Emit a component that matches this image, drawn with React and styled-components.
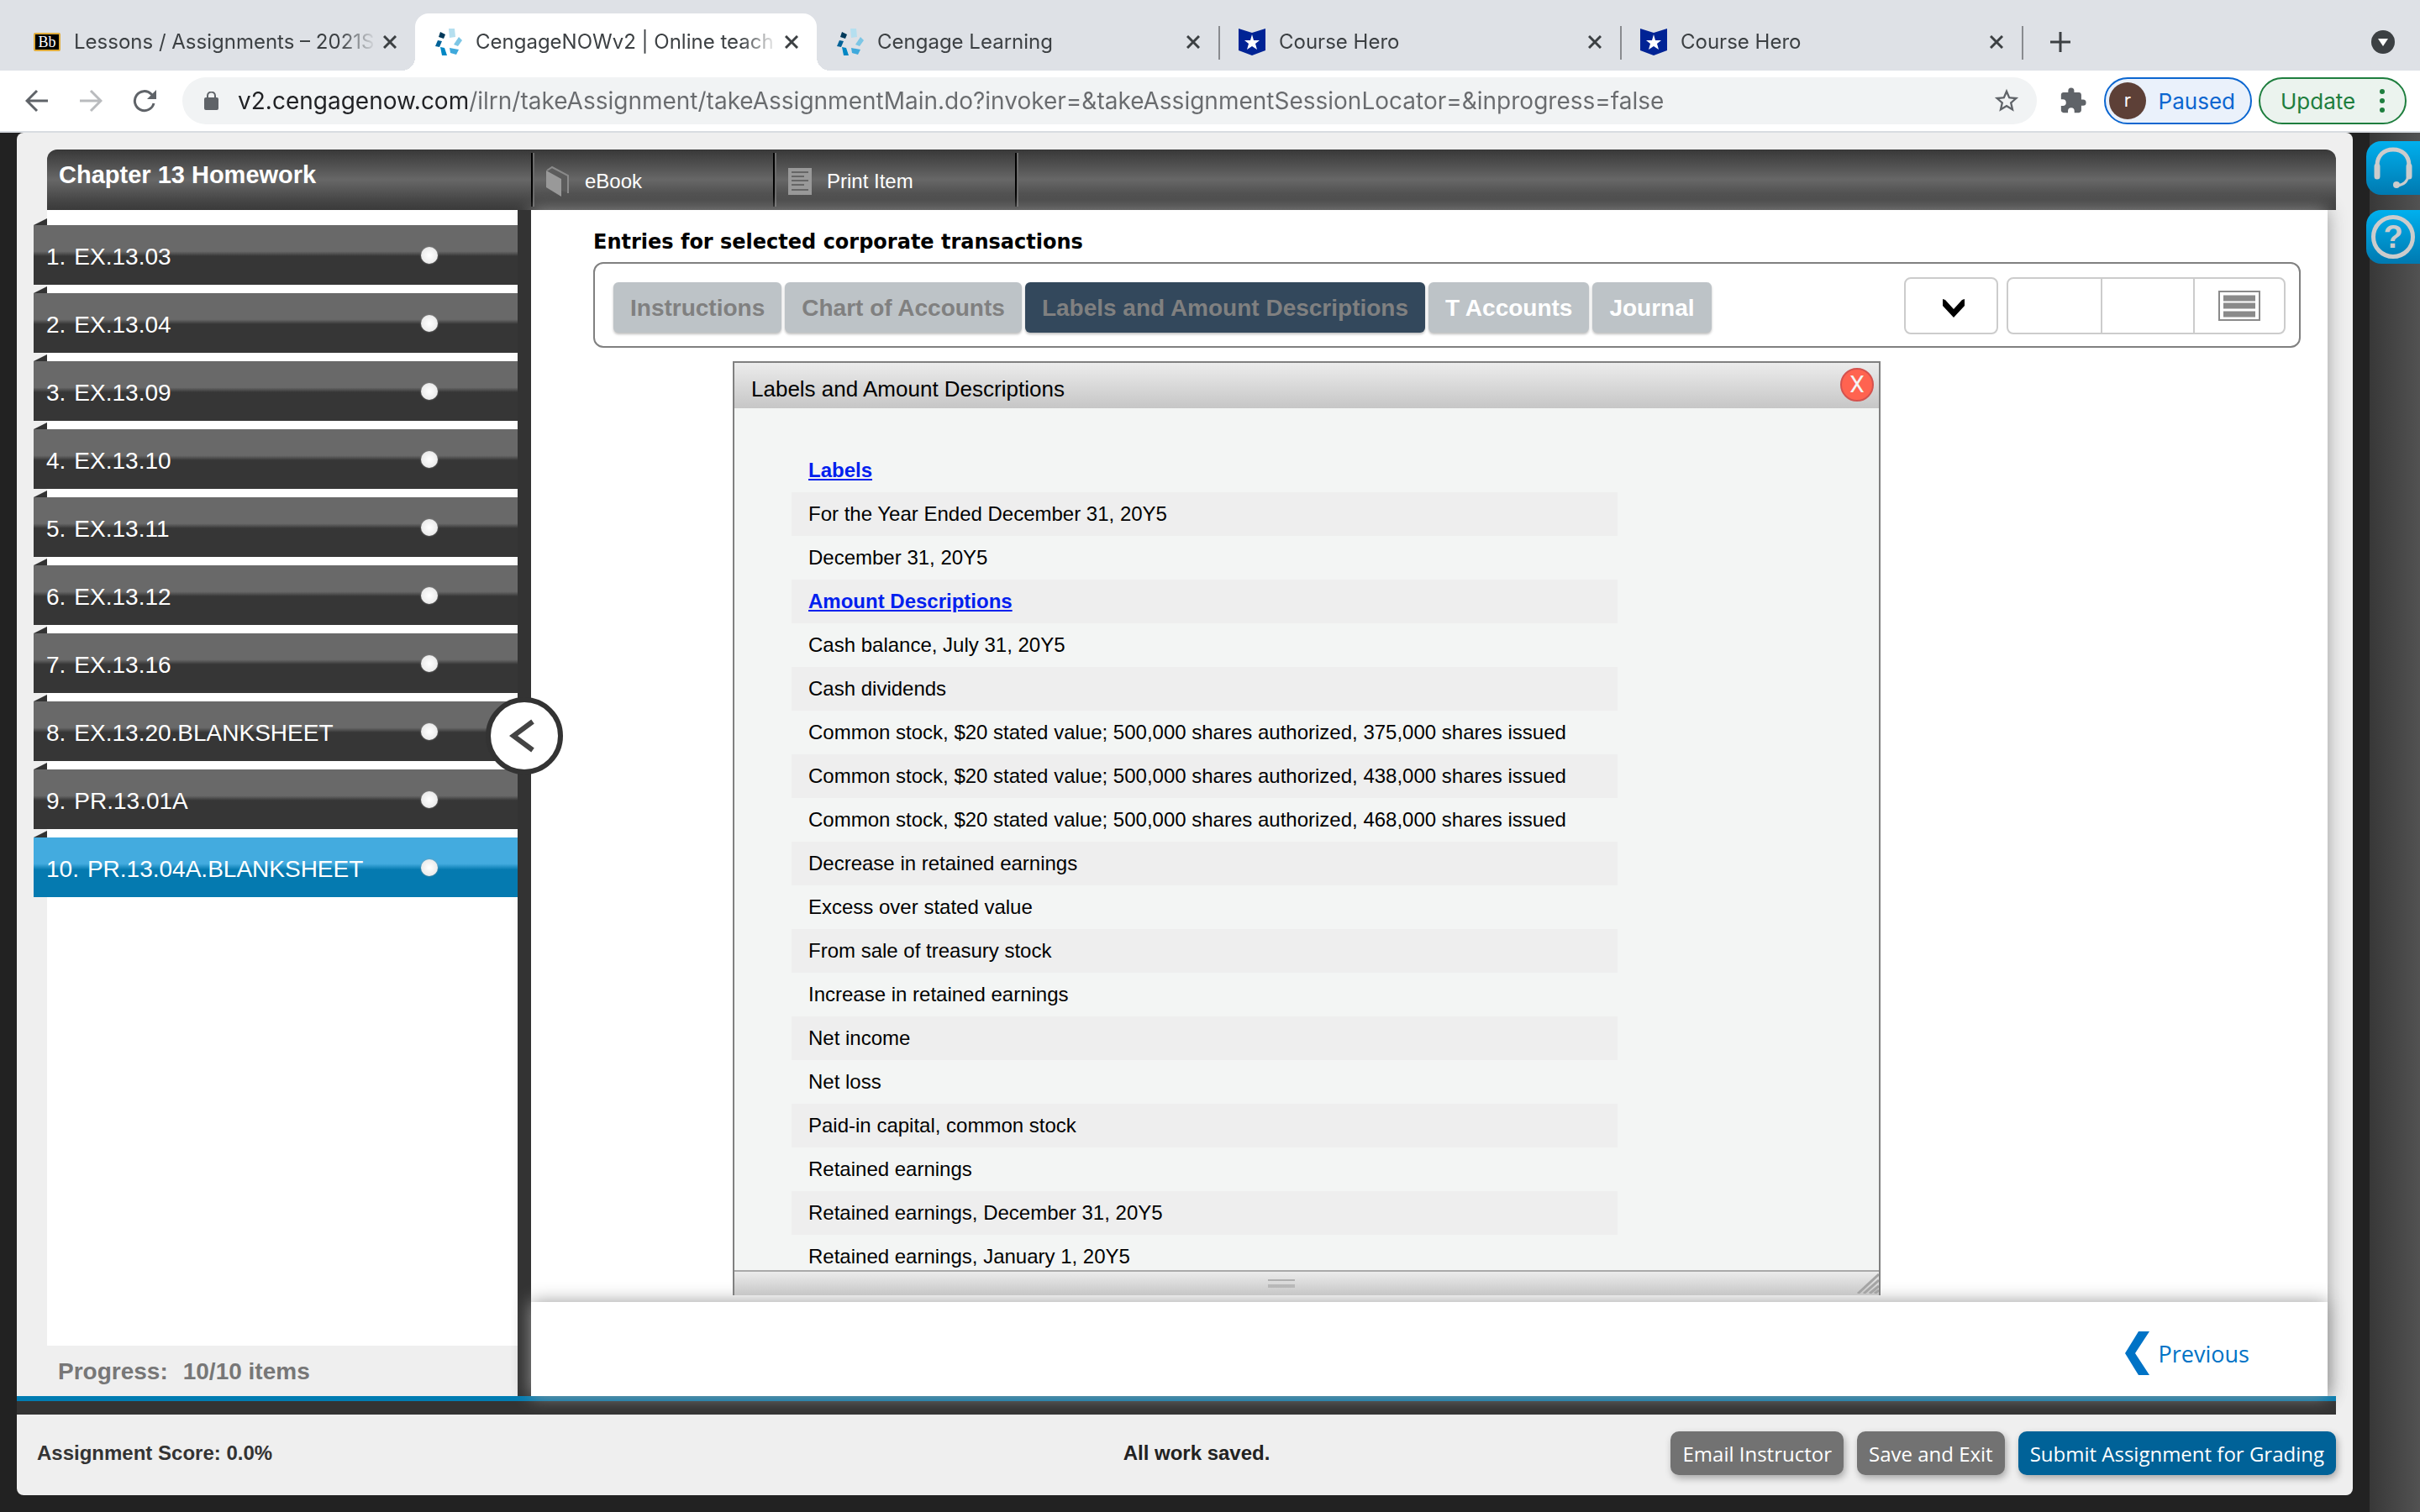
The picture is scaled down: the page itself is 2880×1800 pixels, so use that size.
import React from 'react';
import styled, { createGlobalStyle } from 'styled-components';

const GlobalStyle = createGlobalStyle`
    * {
        box-sizing: border-box;
    }

    body {
        margin: 0;
        background: #222222;
        font-family: "Liberation Sans", Arial, sans-serif;
    }

    button, input {
        margin: 0;
        padding: 0;
        border: 0;
        background: none;
        font: inherit;
        color: inherit;
    }

    button {
        cursor: pointer;
    }

    svg {
        display: block;
        flex: none;
    }
`;

const Page = styled.div`
    display: flex;
    flex-direction: column;
    height: 100vh;
`;

/* ---------- browser ---------- */

const TabStrip = styled.div`
    display: flex;
    flex: none;
    height: 84px;
    padding: 16px 30px 0 16px;
    background: #dee1e6;
    color: #3c4043;
    font-family: Inter, sans-serif;
    font-size: 24px;
`;

const BrowserTab = styled.div`
    position: relative;
    display: flex;
    align-items: center;
    width: 478px;
    height: 68px;
    padding: 0 20px 0 24px;
    border-radius: 16px 16px 0 0;
    background: ${props => (props.$active ? '#ffffff' : 'transparent')};

    &::before, &::after {
        content: "";
        display: ${props => (props.$active ? 'block' : 'none')};
        position: absolute;
        bottom: 0;
        width: 16px;
        height: 16px;
    }

    &::before {
        left: -16px;
        background: radial-gradient(circle at 0 0, transparent 16px, #ffffff 16px);
    }

    &::after {
        right: -16px;
        background: radial-gradient(circle at 100% 0, transparent 16px, #ffffff 16px);
    }
`;

const TabTitle = styled.button`
    flex: 1;
    min-width: 0;
    margin: 0 2px 0 16px;
    overflow: hidden;
    line-height: 32px;
    text-align: left;
    white-space: nowrap;
    mask-image: linear-gradient(90deg, #000 calc(100% - 48px), transparent calc(100% - 4px));
`;

const IconButton = styled.button`
    display: flex;
    align-items: center;
    justify-content: center;
    flex: none;
    width: ${props => props.$width || 20}px;
    height: 32px;
    color: ${props => props.$color || 'inherit'};
`;

const Divider = styled.div`
    width: 2px;
    height: 40px;
    margin: 15px -2px 0 0;
    background: #898b8f;
`;

const StripSpacer = styled.div`
    flex: 1;
`;

const StripAction = styled(IconButton)`
    width: 28px;
    height: 68px;
    margin-left: 32px;
`;

const Blackboard = styled.span`
    flex: none;
    width: 32px;
    height: 22px;
    border: 2px solid #e0ac3c;
    border-radius: 2px;
    background: #000;
    color: #fff;
    font: 18px/18px "Liberation Serif", serif;
    text-align: center;
`;

const Toolbar = styled.div`
    display: flex;
    align-items: center;
    flex: none;
    height: 74px;
    padding: 0 16px 0 28px;
    border-bottom: 2px solid #d8dce1;
    background: #ffffff;
    color: #5f6368;
    font-family: Inter, sans-serif;
    font-size: 26px;
`;

const NavButtons = styled.div`
    display: flex;
    gap: 32px;
    margin-right: 29px;
`;

const AddressBar = styled.div`
    display: flex;
    align-items: center;
    flex: 1;
    height: 56px;
    padding: 0 20px 0 26px;
    border-radius: 28px;
    background: #f1f3f4;
`;

const Address = styled.input`
    flex: 1;
    height: 40px;
    margin-left: 23px;
    outline: 0;
    background: linear-gradient(90deg, #202124 273px, #696b6e 273px);
    background-clip: text;
    color: transparent;
    font-size: 28px;
`;

const Extensions = styled(IconButton)`
    margin: 0 20px 0 26px;
    width: 34px;
`;

const Pill = styled.button`
    display: flex;
    align-items: center;
    justify-content: space-between;
    width: 176px;
    height: 56px;
    margin-right: 8px;
    padding: ${props => (props.$green ? '0 24px 0 24px' : '0 18px 0 4px')};
    border: 2px solid ${props => (props.$green ? '#1e7e3e' : '#0b66d0')};
    border-radius: 28px;
    background: ${props => (props.$green ? '#ebf3ee' : '#eaf1fb')};
    color: ${props => (props.$green ? '#1e7e3e' : '#0b66d0')};

    &:last-child {
        margin-right: 0;
    }
`;

const Avatar = styled.span`
    width: 44px;
    height: 44px;
    border-radius: 50%;
    background: #5d4037;
    color: #ffffff;
    font-size: 22px;
    line-height: 42px;
    text-align: center;
`;

/* ---------- application frame ---------- */

const Backdrop = styled.div`
    display: flex;
    flex: 1;
    min-height: 0;
    background: #222222;
`;

const Shell = styled.div`
    display: flex;
    flex-direction: column;
    flex: 1;
    min-width: 0;
    margin: 0 20px 20px;
    padding-top: 20px;
    border-radius: 8px;
    background: #efefef;
`;

const SideStrip = styled.aside`
    display: flex;
    flex-direction: column;
    gap: 18px;
    width: 60px;
    padding-top: 10px;
    background: linear-gradient(90deg, #383838, #525252);
`;

const HelpButton = styled.button`
    display: flex;
    align-items: center;
    justify-content: center;
    width: 64px;
    height: 64px;
    margin-left: -4px;
    border-radius: 18px 0 0 18px;
    background: linear-gradient(#00b0ee, #0079b0);
    color: #cccccc;
`;

const QuestionMark = styled.span`
    width: 52px;
    height: 52px;
    border: 5px solid #cccccc;
    border-radius: 50%;
    font-size: 38px;
    font-weight: bold;
    line-height: 42px;
`;

const TitleBar = styled.header`
    display: flex;
    align-items: center;
    flex: none;
    height: 72px;
    margin: 0 20px 0 36px;
    border-radius: 12px 12px 0 0;
    background: linear-gradient(#383838, #676767 50%, #464646 84%, #3a3a3a);
    color: #ffffff;
`;

const CourseTitle = styled.h1`
    width: 576px;
    margin: 0;
    padding: 0 0 12px 14px;
    font-size: 29px;
    line-height: 32px;
`;

const HeaderLink = styled.button`
    display: flex;
    align-items: center;
    gap: 18px;
    width: 288px;
    height: 64px;
    padding: 4px 0 0 16px;
    border-left: 2px solid #000000;
    box-shadow: inset 2px 0 #6b6b6b;
    font-size: 24px;
`;

const HeaderEnd = styled.div`
    width: 4px;
    height: 64px;
    border-left: 2px solid #000000;
    border-right: 2px solid #6b6b6b;
`;

const Workspace = styled.div`
    display: flex;
    flex: 1;
    min-height: 0;
    margin-right: 30px;
`;

/* ---------- sidebar ---------- */

const Sidebar = styled.nav`
    display: flex;
    flex-direction: column;
    width: 596px;
`;

const ItemList = styled.ol`
    display: flex;
    flex-direction: column;
    gap: 10px;
    flex: 1;
    margin: 0 0 0 36px;
    padding: 18px 0 0;
    background: #ffffff;
    list-style: none;
`;

const Item = styled.li`
    position: relative;
    height: 71px;
    margin-left: -16px;
    background: ${props => (props.$current
        ? 'linear-gradient(#43abdf 44%, #057ab0 54%)'
        : 'linear-gradient(#696969 44%, #363636 52%)')};

    &::before {
        content: "";
        position: absolute;
        top: -8px;
        left: 0;
        width: 16px;
        height: 8px;
        background: #333333;
        clip-path: polygon(0 100%, 100% 0, 100% 100%);
    }
`;

const ItemButton = styled.button`
    display: flex;
    align-items: center;
    gap: 10px;
    width: 100%;
    height: 100%;
    padding: 0 95px 0 15px;
    color: #ffffff;
    font-size: 28px;
    white-space: nowrap;

    span {
        padding-top: 5px;
    }

    &::after {
        content: "";
        width: 20px;
        height: 20px;
        margin-left: auto;
        border-radius: 50%;
        background: radial-gradient(circle, #ffffff, #e2e2e2);
        box-shadow: 0 0 2px #999999;
    }
`;

const Progress = styled.div`
    display: flex;
    gap: 18px;
    flex: none;
    height: 60px;
    padding: 0 0 0 49px;
    color: #777777;
    font-size: 28px;
    font-weight: bold;
    line-height: 62px;
`;

const Splitter = styled.div`
    position: relative;
    z-index: 1;
    width: 16px;
    background: #333333;
`;

const Collapse = styled.button`
    position: absolute;
    z-index: 4;
    top: 580px;
    left: -38px;
    display: flex;
    align-items: center;
    justify-content: center;
    width: 92px;
    height: 92px;
    padding-right: 6px;
    border: 6px solid #333333;
    border-radius: 50%;
    background: #ffffff;
`;

/* ---------- main panel ---------- */

const Main = styled.main`
    display: flex;
    flex-direction: column;
    flex: 1;
    min-width: 0;
    background: #ffffff;
    box-shadow: 0 0 20px #999999;
`;

const Content = styled.section`
    position: relative;
    z-index: 2;
    display: flex;
    flex-direction: column;
    flex: 1;
    min-height: 0;
    margin-bottom: 8px;
    padding: 24px 32px 0 74px;
`;

const Heading = styled.h2`
    margin: 0 0 10px;
    font-family: "DejaVu Sans", Verdana, sans-serif;
    font-size: 24px;
    line-height: 28px;
`;

const TabBar = styled.div`
    display: flex;
    align-items: center;
    gap: 4px;
    flex: none;
    height: 102px;
    padding: 0 16px 0 22px;
    border: 2px solid #808080;
    border-radius: 12px;
`;

const SheetTab = styled.button`
    height: 60px;
    margin-top: 6px;
    padding: 2px 20px 0;
    border-radius: 6px;
    background: ${props => (props.$active ? '#33485c' : '#bdc3c7')};
    box-shadow: 0 2px 3px rgba(0, 0, 0, 0.25);
    color: ${props => (props.$open ? '#ffffff' : '#808080')};
    font-size: 28px;
    font-weight: bold;
    white-space: nowrap;
`;

const ToolGroup = styled.div`
    display: flex;
    height: 68px;
    margin-top: 2px;
    margin-left: ${props => (props.$first ? 'auto' : '6px')};
    border: 2px solid #cccccc;
    border-radius: 8px;
`;

const Tool = styled.button`
    display: flex;
    align-items: center;
    justify-content: center;
    width: ${props => props.$width || 110}px;
    padding: ${props => (props.$dropdown ? '6px 0 0 6px' : '0')};

    & + & {
        border-left: 2px solid #cccccc;
    }
`;

const Dialog = styled.section`
    display: flex;
    flex-direction: column;
    flex: 1;
    min-height: 0;
    margin: 16px 500px 0 166px;
    border: 2px solid #808080;
    border-bottom: 0;
    background: #f3f5f4;
`;

const DialogHeader = styled.header`
    display: flex;
    align-items: center;
    justify-content: space-between;
    flex: none;
    height: 54px;
    padding: 0 6px 2px 20px;
    background: linear-gradient(#ececec, #c6c6c6);
`;

const DialogTitle = styled.h3`
    margin: 0;
    padding-top: 10px;
    font-size: 26px;
    font-weight: normal;
`;

const CloseButton = styled.button`
    width: 40px;
    height: 40px;
    border: 2px solid #d4524e;
    border-radius: 50%;
    background: #ff6350;
    color: #f4f4f4;
    font-family: Roboto, sans-serif;
    font-size: 28px;
    line-height: 36px;
`;

const Rows = styled.ul`
    flex: 1;
    min-height: 0;
    margin: 0;
    padding: 48px 0 0 68px;
    overflow: hidden;
    list-style: none;
`;

const Row = styled.li`
    width: 76%;
    height: 52px;
    padding-left: 20px;
    font-size: 24px;
    line-height: 52px;

    &:nth-child(even) {
        background: #eeeeee;
    }

    a {
        color: #0020ee;
        font-weight: bold;
    }
`;

const DialogFooter = styled.footer`
    display: flex;
    align-items: center;
    flex: none;
    height: 30px;
    border-top: 2px solid #a9a9a9;
    background: linear-gradient(#ececec, #c6c6c6);
`;

const Grip = styled.span`
    width: 32px;
    height: 10px;
    margin: 0 auto 0 calc(50% - 46px);
    border-top: 2px solid #b0b0b0;
    border-bottom: 4px solid #b8b8b8;
`;

const Pager = styled.footer`
    position: relative;
    z-index: 1;
    display: flex;
    align-items: center;
    justify-content: flex-end;
    flex: none;
    height: 112px;
    padding: 10px 93px 0;
    background: #ffffff;
    box-shadow: 0 0 20px #999999;
`;

const Previous = styled.button`
    display: flex;
    align-items: center;
    gap: 10px;
    color: #0073c6;
    font-family: "Open Sans", sans-serif;
    font-size: 27px;
`;

/* ---------- status bar ---------- */

const Rail = styled.div`
    flex: none;
    height: 22px;
    margin-right: 20px;
    border-top: 6px solid #007cb2;
    background: #333333;
`;

const StatusBar = styled.footer`
    display: grid;
    grid-template-columns: 1fr auto 1fr;
    align-items: center;
    flex: none;
    height: 96px;
    padding: 0 20px 4px 24px;
    color: #333333;
    font-size: 24px;
    font-weight: bold;
`;

const Saved = styled.output`
    padding-left: 24px;
    color: #222222;
`;

const Actions = styled.div`
    display: flex;
    justify-content: flex-end;
    gap: 16px;
`;

const ActionButton = styled.button`
    height: 52px;
    padding: 0 14px;
    border-radius: 10px;
    background: ${props => (props.$primary ? '#006298' : '#727272')};
    box-shadow: 2px 4px 8px rgba(0, 0, 0, 0.3);
    color: #ffffff;
    font-family: "Open Sans", sans-serif;
    font-size: 24px;
    font-weight: 400;
    white-space: nowrap;
`;

/* ---------- icons ---------- */

const CrossIcon = () => (
    <svg width="16" height="16" viewBox="0 0 16 16" stroke="#3c4043" strokeWidth="3">
        <path d="M1 1l14 14M15 1L1 15" />
    </svg>
);

const CengageIcon = () => (
    <svg width="32" height="32" viewBox="0 0 32 32">
        <path d="M16 0h7l1 10-7 1z" fill="#b5dfef" />
        <path d="M6 4l6 3-2 5-6-2z" fill="#00395a" />
        <path d="M3 14l5 1-3 7-5-1z" fill="#006298" />
        <path d="M6 22l5 1 3 9H8z" fill="#0087c4" />
        <path d="M17 23l11 2-3 6-7-2z" fill="#3fa9dc" />
        <path d="M28 10l4 4-5 7-5-2z" fill="#7cc6e5" />
    </svg>
);

const CourseHeroIcon = () => (
    <svg width="32" height="32" viewBox="0 0 32 32">
        <path d="M0 0l16 5L32 0v26l-16 6-16-6z" fill="#002395" />
        <path d="M16 7l2 7h7l-5 4 2 7-6-4-6 4 2-7-5-4h7z" fill="#fff" />
    </svg>
);

const PlusIcon = () => (
    <svg width="24" height="24" viewBox="0 0 24 24" stroke="#3c4043" strokeWidth="3">
        <path d="M12 0v24M0 12h24" />
    </svg>
);

const TabSearchIcon = () => (
    <svg width="28" height="28" viewBox="0 0 28 28">
        <circle cx="14" cy="14" r="14" fill="#3c4043" />
        <path d="M8 10h12l-6 9z" fill="#fff" />
    </svg>
);

const BackIcon = ({ flip }) => (
    <svg width="28" height="28" viewBox="0 0 28 28" fill="none" stroke="currentColor" strokeWidth="3">
        <path d={flip ? 'M1 14h24M14 2l12 12-12 12' : 'M27 14H3M14 2L2 14l12 12'} />
    </svg>
);

const ReloadIcon = () => (
    <svg width="28" height="28" viewBox="0 0 28 28" fill="none" stroke="currentColor" strokeWidth="3">
        <path d="M25 17a11.500 11.500 0 1 1-3-11l4 4" />
        <path d="M28 1v11H17z" fill="currentColor" stroke="none" />
    </svg>
);

const LockIcon = () => (
    <svg width="17" height="22" viewBox="0 0 17 22">
        <path d="M4 9V5a4.500 4.500 0 0 1 9 0v4" fill="none" stroke="#5f6368" strokeWidth="2" />
        <rect y="7" width="17" height="15" rx="2" fill="#5f6368" />
    </svg>
);

const StarIcon = () => (
    <svg width="34" height="34" viewBox="0 0 24 24" fill="currentColor">
        <path d="M22 9.240l-7.190-.62L12 2 9.190 8.630 2 9.240l5.460 4.730L5.820 21 12 17.270 18.180 21l-1.630-7.030L22 9.240zM12 15.400l-3.760 2.270 1-4.280-3.320-2.880 4.380-.38L12 6.100l1.710 4.040 4.380.38-3.320 2.880 1 4.280L12 15.400z" />
    </svg>
);

const PuzzleIcon = () => (
    <svg width="34" height="34" viewBox="0 0 24 24" fill="currentColor">
        <path d="M20.500 11H19V7c0-1.100-.9-2-2-2h-4V3.500a2.500 2.500 0 0 0-5 0V5H4c-1.100 0-2 .9-2 2v3.800h1.500a2.700 2.700 0 0 1 0 5.400H2V20c0 1.100.9 2 2 2h3.800v-1.500a2.700 2.700 0 0 1 5.400 0V22H17c1.100 0 2-.9 2-2v-4h1.500a2.500 2.500 0 0 0 0-5z" />
    </svg>
);

const DotsIcon = () => (
    <svg width="6" height="28" viewBox="0 0 6 28" fill="currentColor">
        <circle cx="3" cy="3" r="3" />
        <circle cx="3" cy="14" r="3" />
        <circle cx="3" cy="25" r="3" />
    </svg>
);

const BookIcon = () => (
    <svg width="28" height="38" viewBox="0 0 28 38">
        <path d="M1 5l6-4 18 10v21l-7-2z" fill="#5c5c5c" />
        <path d="M0 6l18 10v21L0 26z" fill="#999" />
        <path d="M1 6l6-4 19 10v21" fill="none" stroke="#8a8a8a" strokeWidth="2" />
    </svg>
);

const PageIcon = () => (
    <svg width="28" height="32" viewBox="0 0 28 32">
        <path d="M0 0h28v32H0z" fill="#999" />
        <path d="M4 5h20M4 10h15M4 15h20M4 20h15M4 26h20" stroke="#666" strokeWidth="2" />
    </svg>
);

const HeadsetIcon = () => (
    <svg width="48" height="50" viewBox="0 0 48 50" fill="none" stroke="#ccc">
        <path d="M5 28v-6C5 10 13 3 24 3s19 7 19 19v6" strokeWidth="5" />
        <path d="M5 23v12M43 23v12" strokeWidth="7" strokeLinecap="round" />
        <path d="M42 34c-1 7-5 11-13 12" strokeWidth="3" />
        <circle cx="28" cy="45" r="4" fill="#ccc" stroke="none" />
    </svg>
);

const ChevronLeftIcon = () => (
    <svg width="30" height="40" viewBox="0 0 30 40" fill="none" stroke="#444" strokeWidth="6">
        <path d="M28 3L5 20l23 17" />
    </svg>
);

const ChevronDownIcon = () => (
    <svg width="26" height="22" viewBox="0 0 26 22">
        <path d="M0 0l3 1 10 11L23 1l3-1v8L13 22 0 8z" />
    </svg>
);

const ListIcon = () => (
    <svg width="50" height="36" viewBox="0 0 50 36">
        <rect x="1" y="1" width="48" height="34" fill="none" stroke="#8a8a8a" strokeWidth="2" />
        <path d="M6 9h38M6 18h38M6 28h38" stroke="#8a8a8a" strokeWidth="7" />
    </svg>
);

const ResizeIcon = () => (
    <svg width="26" height="24" viewBox="0 0 26 24" stroke="#a4a4a4" strokeWidth="3">
        <path d="M1 24L26 1M8 24L26 8M15 24l11-9M21 24l5-4" />
    </svg>
);

const PreviousIcon = () => (
    <svg width="30" height="52" viewBox="0 0 30 52" fill="currentColor">
        <path d="M16 0h13L12 26l17 26H16L0 26z" />
    </svg>
);

/* ---------- data ---------- */

const browserTabs = [
    { title: 'Lessons / Assignments – 2021S', icon: <Blackboard>Bb</Blackboard> },
    { title: 'CengageNOWv2 | Online teach', icon: <CengageIcon />, active: true },
    { title: 'Cengage Learning', icon: <CengageIcon />, divider: true },
    { title: 'Course Hero', icon: <CourseHeroIcon />, divider: true },
    { title: 'Course Hero', icon: <CourseHeroIcon />, divider: true },
];

const assignments = [
    'EX.13.03',
    'EX.13.04',
    'EX.13.09',
    'EX.13.10',
    'EX.13.11',
    'EX.13.12',
    'EX.13.16',
    'EX.13.20.BLANKSHEET',
    'PR.13.01A',
    'PR.13.04A.BLANKSHEET',
];

const sheets = [
    { name: 'Instructions' },
    { name: 'Chart of Accounts' },
    { name: 'Labels and Amount Descriptions', active: true },
    { name: 'T Accounts', open: true },
    { name: 'Journal', open: true },
];

const rows = [
    { text: 'Labels', heading: true },
    { text: 'For the Year Ended December 31, 20Y5' },
    { text: 'December 31, 20Y5' },
    { text: 'Amount Descriptions', heading: true },
    { text: 'Cash balance, July 31, 20Y5' },
    { text: 'Cash dividends' },
    { text: 'Common stock, $20 stated value; 500,000 shares authorized, 375,000 shares issued' },
    { text: 'Common stock, $20 stated value; 500,000 shares authorized, 438,000 shares issued' },
    { text: 'Common stock, $20 stated value; 500,000 shares authorized, 468,000 shares issued' },
    { text: 'Decrease in retained earnings' },
    { text: 'Excess over stated value' },
    { text: 'From sale of treasury stock' },
    { text: 'Increase in retained earnings' },
    { text: 'Net income' },
    { text: 'Net loss' },
    { text: 'Paid-in capital, common stock' },
    { text: 'Retained earnings' },
    { text: 'Retained earnings, December 31, 20Y5' },
    { text: 'Retained earnings, January 1, 20Y5' },
];

const url = 'v2.cengagenow.com/ilrn/takeAssignment/takeAssignmentMain.do?invoker=&takeAssignmentSessionLocator=&inprogress=false';

/* ---------- sections ---------- */

const Browser = () => (
    <>
        <TabStrip>
            {browserTabs.map((tab, i) => (
                <React.Fragment key={i}>
                    <BrowserTab $active={tab.active}>
                        {tab.icon}
                        <TabTitle>{tab.title}</TabTitle>
                        <IconButton aria-label="Close tab"><CrossIcon /></IconButton>
                    </BrowserTab>
                    {tab.divider && <Divider />}
                </React.Fragment>
            ))}
            <StripAction aria-label="New tab"><PlusIcon /></StripAction>
            <StripSpacer />
            <StripAction aria-label="Search tabs"><TabSearchIcon /></StripAction>
        </TabStrip>
        <Toolbar>
            <NavButtons>
                <IconButton $width={32} aria-label="Back"><BackIcon /></IconButton>
                <IconButton $width={32} $color="#b9bbbe" aria-label="Forward"><BackIcon flip /></IconButton>
                <IconButton $width={32} aria-label="Reload"><ReloadIcon /></IconButton>
            </NavButtons>
            <AddressBar>
                <LockIcon />
                <Address aria-label="Address" defaultValue={url} />
                <IconButton $width={32} aria-label="Bookmark"><StarIcon /></IconButton>
            </AddressBar>
            <Extensions aria-label="Extensions"><PuzzleIcon /></Extensions>
            <Pill><Avatar>r</Avatar>Paused</Pill>
            <Pill $green>Update<DotsIcon /></Pill>
        </Toolbar>
    </>
);

const AssignmentNav = () => (
    <Sidebar>
        <ItemList>
            {assignments.map((name, i) => (
                <Item key={name} $current={i === assignments.length - 1}>
                    <ItemButton><span>{i + 1}.</span><span>{name}</span></ItemButton>
                </Item>
            ))}
        </ItemList>
        <Progress><span>Progress:</span><span>10/10 items</span></Progress>
    </Sidebar>
);

const LabelsDialog = () => (
    <Dialog>
        <DialogHeader>
            <DialogTitle>Labels and Amount Descriptions</DialogTitle>
            <CloseButton aria-label="Close">X</CloseButton>
        </DialogHeader>
        <Rows>
            {rows.map(row => (
                <Row key={row.text}>
                    {row.heading ? <a href="#labels">{row.text}</a> : row.text}
                </Row>
            ))}
        </Rows>
        <DialogFooter>
            <Grip />
            <ResizeIcon />
        </DialogFooter>
    </Dialog>
);

const App = () => {
    return (
        <Page>
            <GlobalStyle />
            <Browser />
            <Backdrop>
                <Shell>
                    <TitleBar>
                        <CourseTitle>Chapter 13 Homework</CourseTitle>
                        <HeaderLink><BookIcon />eBook</HeaderLink>
                        <HeaderLink><PageIcon />Print Item</HeaderLink>
                        <HeaderEnd />
                    </TitleBar>
                    <Workspace>
                        <AssignmentNav />
                        <Splitter>
                            <Collapse aria-label="Collapse sidebar"><ChevronLeftIcon /></Collapse>
                        </Splitter>
                        <Main>
                            <Content>
                                <Heading>Entries for selected corporate transactions</Heading>
                                <TabBar>
                                    {sheets.map(sheet => (
                                        <SheetTab key={sheet.name} $active={sheet.active} $open={sheet.open}>
                                            {sheet.name}
                                        </SheetTab>
                                    ))}
                                    <ToolGroup $first>
                                        <Tool $width={108} $dropdown aria-label="Expand"><ChevronDownIcon /></Tool>
                                    </ToolGroup>
                                    <ToolGroup>
                                        <Tool aria-label="Undo" />
                                        <Tool aria-label="Redo" />
                                        <Tool $width={108} aria-label="List view"><ListIcon /></Tool>
                                    </ToolGroup>
                                </TabBar>
                                <LabelsDialog />
                            </Content>
                            <Pager>
                                <Previous><PreviousIcon />Previous</Previous>
                            </Pager>
                        </Main>
                    </Workspace>
                    <Rail />
                    <StatusBar>
                        <div>Assignment Score: 0.0%</div>
                        <Saved>All work saved.</Saved>
                        <Actions>
                            <ActionButton>Email Instructor</ActionButton>
                            <ActionButton>Save and Exit</ActionButton>
                            <ActionButton $primary>Submit Assignment for Grading</ActionButton>
                        </Actions>
                    </StatusBar>
                </Shell>
                <SideStrip>
                    <HelpButton aria-label="Support"><HeadsetIcon /></HelpButton>
                    <HelpButton aria-label="Help"><QuestionMark>?</QuestionMark></HelpButton>
                </SideStrip>
            </Backdrop>
        </Page>
    );
};

export default App;
